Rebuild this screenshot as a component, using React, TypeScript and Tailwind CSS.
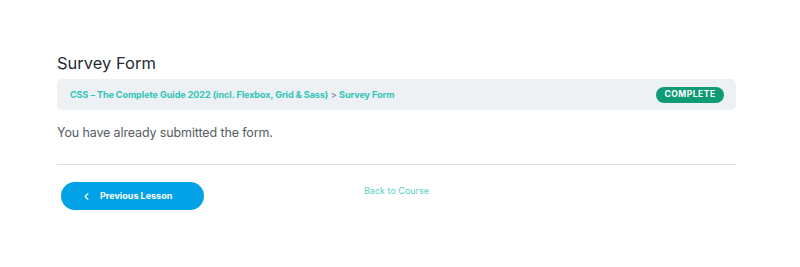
import { ChevronLeft } from 'lucide-react';

export default function App() {
  return (
    <div className="w-[800px] h-[267px] bg-white font-['Inter','Liberation_Sans',sans-serif]">
      <div className="pl-[57px] pr-[64px] pt-[52px]">
        <h1 className="text-[16.5px] leading-[22px] text-[#262b33] font-normal">Survey Form</h1>

        <div className="mt-[5px] h-[31px] rounded-[5px] bg-[#eef1f4] flex items-center justify-between pl-[13px] pr-[12px]">
          <div className="text-[9px] font-bold text-[#2ec4b6] tracking-[-0.005em]">
            CSS – The Complete Guide 2022 (incl. Flexbox, Grid &amp; Sass)
            <span className="text-[#6b7280] font-normal"> &gt; </span>
            Survey Form
          </div>
          <span className="h-[16px] w-[68px] justify-center rounded-full bg-[#0f9b76] text-white text-[8.5px] font-bold tracking-[0.06em] flex items-center">
            COMPLETE
          </span>
        </div>

        <p className="mt-[13px] text-[12.5px] leading-[20px] text-[#555b63] tracking-[-0.01em]">You have already submitted the form.</p>

        <div className="mt-[21px] border-t border-[#dde2ea]" />

        <div className="mt-[17px] grid grid-cols-3">
          <div className="pl-[4px]">
            <button className="w-[143px] h-[28px] rounded-full bg-[#03a2e6] text-white text-[9px] font-bold flex items-center pl-[20px] gap-[8px]">
              <ChevronLeft size={11} strokeWidth={2.5} />
              Previous Lesson
            </button>
          </div>
          <div className="text-center leading-[14px] -mt-[1px]">
            <a className="text-[9px] text-[#56d0c5]">Back to Course</a>
          </div>
          <div />
        </div>
      </div>
    </div>
  );
}
